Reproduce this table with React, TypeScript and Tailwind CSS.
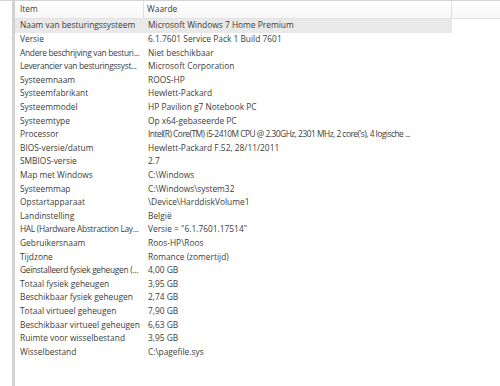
import React from 'react';

// [item, value, squeeze] — squeeze tightens text that Windows shows clipped
const rows: [string, string, boolean?][] = [
  ['Naam van besturingssysteem', 'Microsoft Windows 7 Home Premium'],
  ['Versie', '6.1.7601 Service Pack 1 Build 7601'],
  ['Andere beschrijving van besturi...', 'Niet beschikbaar', true],
  ['Leverancier van besturingssyst...', 'Microsoft Corporation', true],
  ['Systeemnaam', 'ROOS-HP'],
  ['Systeemfabrikant', 'Hewlett-Packard'],
  ['Systeemmodel', 'HP Pavilion g7 Notebook PC'],
  ['Systeemtype', 'Op x64-gebaseerde PC'],
  ['Processor', "Intel(R) Core(TM) i5-2410M CPU @ 2.30GHz, 2301 MHz, 2 core('s), 4 logische ...", true],
  ['BIOS-versie/datum', 'Hewlett-Packard F.52, 28/11/2011'],
  ['SMBIOS-versie', '2.7'],
  ['Map met Windows', 'C:\\Windows'],
  ['Systeemmap', 'C:\\Windows\\system32'],
  ['Opstartapparaat', '\\Device\\HarddiskVolume1'],
  ['Landinstelling', 'België'],
  ['HAL (Hardware Abstraction Lay...', 'Versie = "6.1.7601.17514"', true],
  ['Gebruikersnaam', 'Roos-HP\\Roos'],
  ['Tijdzone', 'Romance (zomertijd)'],
  ['Geïnstalleerd fysiek geheugen (...', '4,00 GB', true],
  ['Totaal fysiek geheugen', '3,95 GB'],
  ['Beschikbaar fysiek geheugen', '2,74 GB'],
  ['Totaal virtueel geheugen', '7,90 GB'],
  ['Beschikbaar virtueel geheugen', '6,63 GB'],
  ['Ruimte voor wisselbestand', '3,95 GB'],
  ['Wisselbestand', 'C:\\pagefile.sys'],
];

export default function App() {
  return (
    <div
      className="w-[500px] h-[386px] bg-white overflow-hidden flex border-t border-[#d4d4d4] text-[#3c3c3c] text-[8.4px]"
      style={{ fontFamily: '"Open Sans", "Noto Sans", sans-serif' }}
    >
      {/* tree pane edge */}
      <div className="w-[12px] shrink-0 bg-white" />
      <div className="w-[3px] shrink-0 bg-[#d2d2d2]" />

      {/* list view */}
      <div className="flex-1 flex flex-col">
        <div className="h-[18px] flex border-b border-[#e2e2e2] bg-gradient-to-b from-white to-[#f7f7f7]">
          <div className="w-[129px] shrink-0 pl-[5px] flex items-center border-r border-[#e0e0e0]">Item</div>
          <div className="w-[308px] shrink-0 pl-[3px] flex items-center border-r border-[#e0e0e0]">Waarde</div>
          <div className="flex-1" />
        </div>
        <div className="flex flex-col">
          {rows.map(([item, value, squeeze], i) => (
            <div
              key={item}
              className={`h-[13.6px] flex items-center whitespace-nowrap ${i === 0 ? 'bg-[#e9e9e9] w-[437px]' : ''}`}
            >
              <div
                className={`w-[129px] shrink-0 pl-[5px] overflow-hidden ${
                  squeeze && item.endsWith('...') ? 'tracking-[-0.3px]' : ''
                }`}
              >
                {item}
              </div>
              <div
                className={`pl-[4px] overflow-hidden ${
                  squeeze && value.endsWith('...') ? 'tracking-[-0.5px]' : ''
                }`}
              >
                {value}
              </div>
            </div>
          ))}
        </div>
      </div>
    </div>
  );
}
